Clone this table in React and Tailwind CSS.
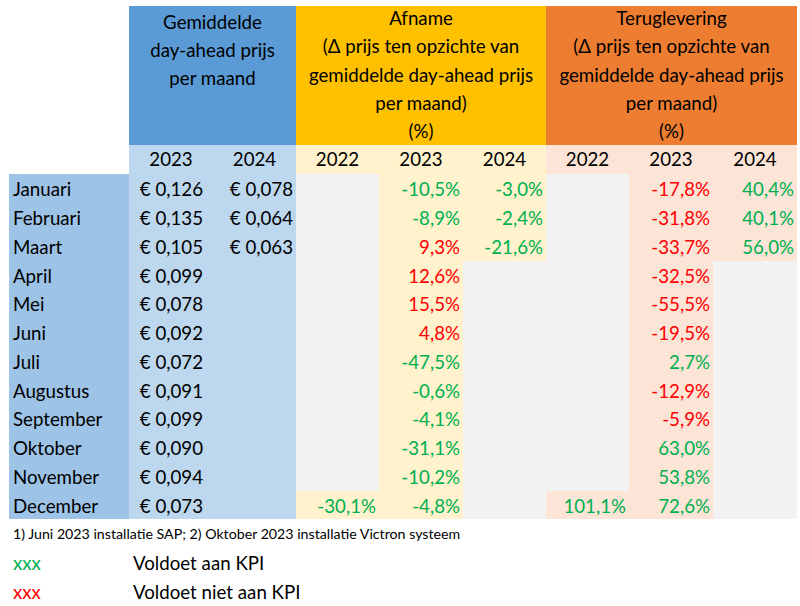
import React from "react";

const G = "text-[#00b050]";
const R = "text-[#ff0000]";

// [maand, 2023, 2024, afname 22/23/24, teruglevering 22/23/24]
const rows = [
  ["Januari", "€ 0,126", "€ 0,078", null, ["-10,5%", G], ["-3,0%", G], null, ["-17,8%", R], ["40,4%", G]],
  ["Februari", "€ 0,135", "€ 0,064", null, ["-8,9%", G], ["-2,4%", G], null, ["-31,8%", R], ["40,1%", G]],
  ["Maart", "€ 0,105", "€ 0,063", null, ["9,3%", R], ["-21,6%", G], null, ["-33,7%", R], ["56,0%", G]],
  ["April", "€ 0,099", "", null, ["12,6%", R], null, null, ["-32,5%", R], null],
  ["Mei", "€ 0,078", "", null, ["15,5%", R], null, null, ["-55,5%", R], null],
  ["Juni", "€ 0,092", "", null, ["4,8%", R], null, null, ["-19,5%", R], null],
  ["Juli", "€ 0,072", "", null, ["-47,5%", G], null, null, ["2,7%", G], null],
  ["Augustus", "€ 0,091", "", null, ["-0,6%", G], null, null, ["-12,9%", R], null],
  ["September", "€ 0,099", "", null, ["-4,1%", G], null, null, ["-5,9%", R], null],
  ["Oktober", "€ 0,090", "", null, ["-31,1%", G], null, null, ["63,0%", G], null],
  ["November", "€ 0,094", "", null, ["-10,2%", G], null, null, ["53,8%", G], null],
  ["December", "€ 0,073", "", ["-30,1%", G], ["-4,8%", G], null, ["101,1%", G], ["72,6%", G], null],
];

const GREY = "bg-[#f2f2f2]";
const YEL = "bg-[#fff2cc]";
const SAL = "bg-[#fce4d6]";

function bgFor(col, i) {
  const last = i === 11;
  const early = i < 3;
  switch (col) {
    case 3: return last ? YEL : GREY;
    case 4: return YEL;
    case 5: return early ? YEL : GREY;
    case 6: return last ? SAL : GREY;
    case 7: return SAL;
    case 8: return early ? SAL : GREY;
    default: return "";
  }
}

function Pct({ v, bg }) {
  return (
    <div className={`${bg} h-[28.75px] pt-[1px] pr-[3px] text-right leading-[28px]`}>
      {v && <span className={v[1]}>{v[0]}</span>}
    </div>
  );
}

export default function App() {
  return (
    <div
      className="w-[800px] h-[606px] bg-white pt-[6px] pl-[9px] text-[18.7px] text-black"
      style={{ fontFamily: "Lato, 'Noto Sans', sans-serif" }}
    >
      <div className="grid grid-cols-[120px_84px_83px_83px_84px_83px_83px_84px_84px]">
        {/* header */}
        <div className="h-[139px]" />
        <div className="col-span-2 bg-[#5b9bd5] pt-[2px] text-center leading-[28px]">
          <div>Gemiddelde</div>
          <div>day-ahead prijs</div>
          <div>per maand</div>
        </div>
        <div className="col-span-3 bg-[#ffc000] text-center leading-[28.25px]">
          <div className="-mt-[2px]">
            <div>Afname</div>
            <div>(Δ prijs ten opzichte van</div>
            <div>gemiddelde day-ahead prijs</div>
            <div>per maand)</div>
            <div>(%)</div>
          </div>
        </div>
        <div className="col-span-3 bg-[#ed7d31] text-center leading-[28.25px]">
          <div className="-mt-[2px]">
            <div>Teruglevering</div>
            <div>(Δ prijs ten opzichte van</div>
            <div>gemiddelde day-ahead prijs</div>
            <div>per maand)</div>
            <div>(%)</div>
          </div>
        </div>

        {/* jaren */}
        <div className="h-[29px]" />
        {["2023", "2024"].map((y) => (
          <div key={"p" + y} className="bg-[#bdd7ee] text-center leading-[29px]">{y}</div>
        ))}
        {["2022", "2023", "2024"].map((y) => (
          <div key={"a" + y} className="bg-[#fff2cc] text-center leading-[29px]">{y}</div>
        ))}
        {["2022", "2023", "2024"].map((y) => (
          <div key={"t" + y} className="bg-[#fce4d6] text-center leading-[29px]">{y}</div>
        ))}

        {/* maanden */}
        {rows.map((r, i) => (
          <React.Fragment key={r[0]}>
            <div className="bg-[#9dc3e6] h-[28.75px] pt-[1px] pl-[4px] leading-[28px]">{r[0]}</div>
            <div className="bg-[#bdd7ee] h-[28.75px] pt-[1px] pr-[10px] text-right leading-[28px]">{r[1]}</div>
            <div className="bg-[#bdd7ee] h-[28.75px] pt-[1px] pr-[3px] text-right leading-[28px]">{r[2]}</div>
            {[3, 4, 5, 6, 7, 8].map((c) => (
              <Pct key={c} v={r[c]} bg={bgFor(c, i)} />
            ))}
          </React.Fragment>
        ))}
      </div>

      <div className="h-[29px] pt-[1px] pl-[4px] text-[14.2px] leading-[28px]">
        1) Juni 2023 installatie SAP; 2) Oktober 2023 installatie Victron systeem
      </div>
      <div className="flex h-[29px] pt-[1px] leading-[28px]">
        <div className={`w-[120px] pl-[4px] ${G}`}>xxx</div>
        <div className="pl-[4px]">Voldoet aan KPI</div>
      </div>
      <div className="flex h-[29px] pt-[1px] leading-[28px]">
        <div className={`w-[120px] pl-[4px] ${R}`}>xxx</div>
        <div className="pl-[4px]">Voldoet niet aan KPI</div>
      </div>
    </div>
  );
}
